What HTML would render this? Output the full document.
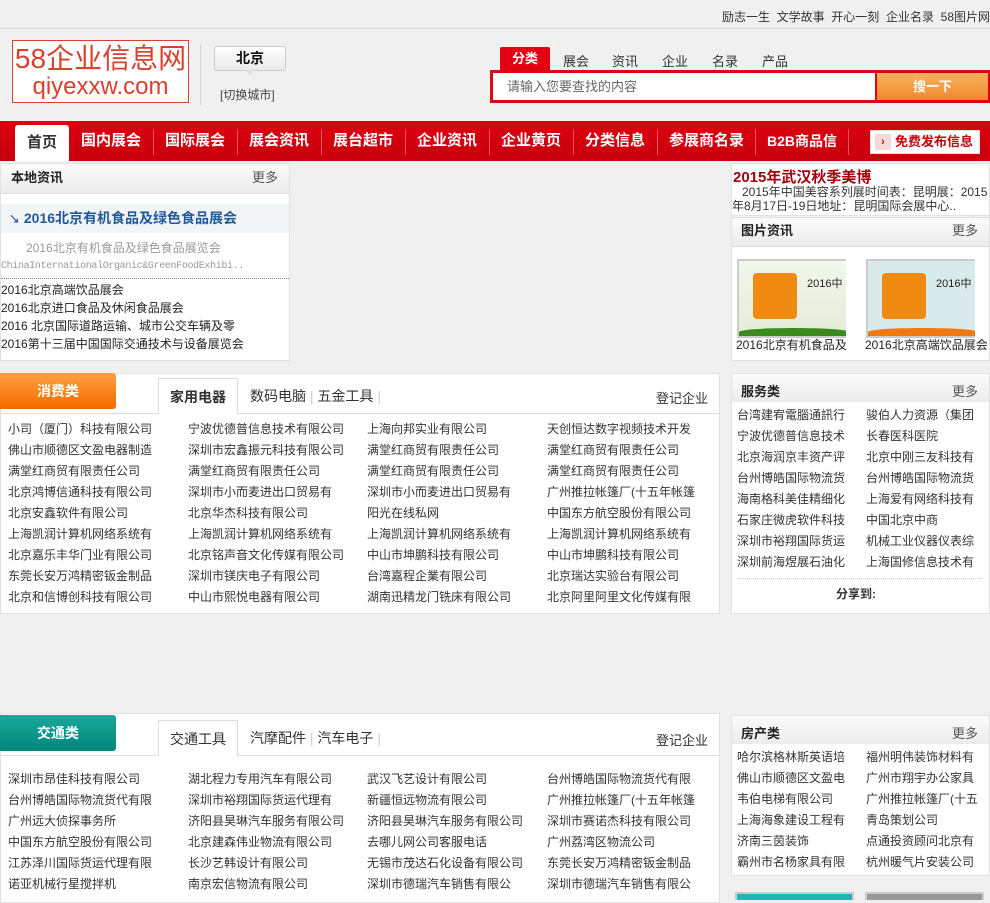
<!DOCTYPE html>
<html><head><meta charset="utf-8">
<style>
*{margin:0;padding:0;box-sizing:border-box}
body{width:990px;height:900px;overflow:hidden;background:#f0f0f0;font-family:"Liberation Sans","WenQuanYi Zen Hei","Noto Sans CJK SC",sans-serif;font-size:12px;color:#333;position:relative}
.a{position:absolute;white-space:nowrap}
.col div{height:21px;line-height:21px;white-space:nowrap;overflow:hidden}
.w{background:#fff;border:1px solid #e2e2e2}
.hd{background:linear-gradient(#fbfbfb,#ececec);border-bottom:1px solid #ddd}
.nav span{position:absolute;top:0;line-height:40px;color:#fff;font-weight:bold;font-size:15px}
.sep{position:absolute;top:8px;width:1px;height:26px;background:#e8505a}
</style></head><body>
<div class="a" style="left:0;top:0;width:990px;height:29px;border-bottom:1px solid #d8d8d8"></div>
<div class="a" style="right:0;top:8px;font-size:12px;color:#333">励志一生&nbsp; 文学故事&nbsp; 开心一刻&nbsp; 企业名录&nbsp; 58图片网</div>
<div class="a" style="left:12px;top:40px;width:177px;height:63px;background:#fff;border:1px solid #d9402e;text-align:center;color:#d9402e">
<div style="font-size:28px;line-height:32px;margin-top:2px">58企业信息网</div>
<div style="font-size:24px;line-height:24px">qiyexxw.com</div></div>
<div class="a" style="left:200px;top:45px;width:1px;height:60px;background:#d5d5d5"></div>
<div class="a" style="left:214px;top:46px;width:72px;height:25px;background:linear-gradient(#fff,#eaeaea);border:1px solid #ccc;border-radius:3px;text-align:center;line-height:23px;font-weight:bold;font-size:14px;color:#111">北京</div>
<div class="a" style="left:245px;top:70px;width:0;height:0;border-left:5px solid transparent;border-right:5px solid transparent;border-top:5px solid #ddd"></div>
<div class="a" style="left:220px;top:86px;color:#444">[切换城市]</div>
<div class="a" style="left:500px;top:47px;width:50px;height:24px;background:#e30013;color:#fff;font-weight:bold;font-size:13px;text-align:center;line-height:24px;border-radius:2px 2px 0 0">分类</div>
<div class="a" style="left:563px;top:51px;font-size:13px">展会</div>
<div class="a" style="left:612px;top:51px;font-size:13px">资讯</div>
<div class="a" style="left:662px;top:51px;font-size:13px">企业</div>
<div class="a" style="left:712px;top:51px;font-size:13px">名录</div>
<div class="a" style="left:762px;top:51px;font-size:13px">产品</div>
<div class="a" style="left:490px;top:70px;width:500px;height:33px;background:#e30013;padding:2px">
<div style="position:absolute;left:3px;top:3px;width:382px;height:27px;background:#fff;color:#666;font-size:13px;line-height:27px;padding-left:14px">请输入您要查找的内容</div>
<div style="position:absolute;left:387px;top:3px;width:111px;height:27px;background:linear-gradient(#f8b060,#ee8a2c);color:#fff;font-weight:bold;font-size:13px;line-height:27px;text-align:center">搜一下</div></div>
<div class="a nav" style="left:0;top:121px;width:990px;height:40px;background:linear-gradient(#dd0010,#c8000c)">
<div style="position:absolute;left:15px;top:4px;width:54px;height:36px;background:#fff;border-radius:3px 3px 0 0"></div>
<span style="left:27px;color:#333;top:2px">首页</span>
<span style="left:81px">国内展会</span><div class="sep" style="left:153px"></div>
<span style="left:165px">国际展会</span><div class="sep" style="left:237px"></div>
<span style="left:249px">展会资讯</span><div class="sep" style="left:321px"></div>
<span style="left:333px">展台超市</span><div class="sep" style="left:405px"></div>
<span style="left:417px">企业资讯</span><div class="sep" style="left:489px"></div>
<span style="left:501px">企业黄页</span><div class="sep" style="left:573px"></div>
<span style="left:585px">分类信息</span><div class="sep" style="left:657px"></div>
<span style="left:669px">参展商名录</span><div class="sep" style="left:755px"></div>
<span style="left:767px;font-size:14px">B2B商品信</span><div class="sep" style="left:848px"></div>
<div style="position:absolute;left:870px;top:9px;width:110px;height:24px;background:#fff;border:1px solid #ddd"><div style="position:absolute;left:4px;top:3px;width:16px;height:16px;background:#f4dada;color:#c00;font-size:11px;text-align:center;line-height:16px;font-weight:bold">›</div><div style="position:absolute;left:24px;top:0;line-height:22px;color:#c8000c;font-weight:bold;font-size:13px">免费发布信息</div></div>
</div>
<div class="a w" style="left:0;top:163px;width:290px;height:198px">
<div class="hd" style="height:30px;line-height:28px;padding-left:10px;font-weight:bold;font-size:13px;color:#222">本地资讯<span style="position:absolute;right:11px;font-weight:normal;color:#555">更多</span></div>
<div style="position:absolute;left:0;top:40px;width:288px;height:29px;background:#f3f4f5;line-height:29px;padding-left:8px;color:#1f5a9a;font-weight:bold;font-size:14px"><span style="font-size:11px">↘</span> 2016北京有机食品及绿色食品展会</div>
<div style="position:absolute;left:25px;top:75px;color:#999">2016北京有机食品及绿色食品展览会</div>
<div style="position:absolute;left:0;top:97px;color:#999;font-family:'Liberation Mono',monospace;font-size:10px;letter-spacing:-0.35px">ChinaInternationalOrganic&amp;GreenFoodExhibi..</div>
<div style="position:absolute;left:0;top:114px;width:288px;border-top:1px dotted #888"></div>
<div class="col" style="position:absolute;left:0;top:117px;color:#222"><div style="height:18px;line-height:18px">2016北京高端饮品展会</div><div style="height:18px;line-height:18px">2016北京进口食品及休闲食品展会</div><div style="height:18px;line-height:18px">2016 北京国际道路运输、城市公交车辆及零</div><div style="height:18px;line-height:18px">2016第十三届中国国际交通技术与设备展览会</div></div>
</div>
<div class="a w" style="left:731px;top:163px;width:259px;height:53px">
<div style="position:absolute;left:1px;top:2px;color:#a0000a;font-weight:bold;font-size:15px">2015年武汉秋季美博</div>
<div style="position:absolute;left:0;top:21px;width:258px;line-height:14px;white-space:normal;color:#333">&nbsp;&nbsp;&nbsp;2015年中国美容系列展时间表：昆明展：2015年8月17日-19日地址：昆明国际会展中心..</div></div>
<div class="a w" style="left:731px;top:217px;width:259px;height:144px">
<div class="hd" style="height:29px;line-height:26px;padding-left:9px;font-weight:bold;font-size:13px;color:#222">图片资讯<span style="position:absolute;right:11px;font-weight:normal;color:#555">更多</span></div>
<div style="position:absolute;left:5px;top:41px;width:109px;height:79px;border:2px solid #ccc;border-right:none;background:linear-gradient(#f2f6ec,#e4ecd8);overflow:hidden"><div style="position:absolute;left:14px;top:12px;width:44px;height:46px;background:#f08a10;border-radius:4px"></div><div style="position:absolute;left:68px;top:14px;font-size:11px;color:#222">2016中</div><div style="position:absolute;left:0;bottom:0;width:110px;height:8px;background:#3c8a1c;border-radius:50% 50% 0 0"></div></div>
<div style="position:absolute;left:134px;top:41px;width:109px;height:79px;border:2px solid #ccc;border-right:none;background:#d9eaea;overflow:hidden"><div style="position:absolute;left:14px;top:12px;width:44px;height:46px;background:#f08a10;border-radius:4px"></div><div style="position:absolute;left:68px;top:14px;font-size:11px;color:#222">2016中</div><div style="position:absolute;left:0;bottom:0;width:110px;height:8px;background:#f07810;border-radius:50% 50% 0 0"></div></div>
<div style="position:absolute;left:4px;top:118px;color:#222">2016北京有机食品及</div>
<div style="position:absolute;left:133px;top:118px;color:#222">2016北京高端饮品展会</div></div>
<div class="a w" style="left:0;top:373px;width:720px;height:241px">
<div style="position:absolute;left:0;top:39px;width:718px;border-top:1px solid #ddd"></div>
<div style="position:absolute;left:-1px;top:-1px;width:116px;height:36px;background:linear-gradient(#ffa040,#f36b00);border-radius:0 3px 3px 0;color:#fff;font-weight:bold;font-size:14px;text-align:center;line-height:36px">消费类</div>
<div style="position:absolute;left:157px;top:4px;width:80px;height:36px;background:#fff;border:1px solid #ddd;border-bottom:none;text-align:center;line-height:36px;font-size:14px;font-weight:bold;color:#333">家用电器</div>
<div style="position:absolute;left:249px;top:12px;font-size:14px;color:#333">数码电脑 <span style="color:#ccc">|</span> 五金工具 <span style="color:#ccc">|</span></div>
<div style="position:absolute;left:655px;top:14px;font-size:13px;color:#333">登记企业</div>
<div class="col" style="position:absolute;left:7px;top:45px;width:170px"><div>小司（厦门）科技有限公司</div><div>佛山市顺德区文盈电器制造</div><div>满堂红商贸有限责任公司</div><div>北京鸿博信通科技有限公司</div><div>北京安鑫软件有限公司</div><div>上海凯润计算机网络系统有</div><div>北京嘉乐丰华门业有限公司</div><div>东莞长安万鸿精密钣金制品</div><div>北京和信博创科技有限公司</div></div>
<div class="col" style="position:absolute;left:187px;top:45px;width:170px"><div>宁波优德普信息技术有限公司</div><div>深圳市宏鑫振元科技有限公司</div><div>满堂红商贸有限责任公司</div><div>深圳市小而麦进出口贸易有</div><div>北京华杰科技有限公司</div><div>上海凯润计算机网络系统有</div><div>北京铭声音文化传媒有限公司</div><div>深圳市镁庆电子有限公司</div><div>中山市熙悦电器有限公司</div></div>
<div class="col" style="position:absolute;left:366px;top:45px;width:170px"><div>上海向邦实业有限公司</div><div>满堂红商贸有限责任公司</div><div>满堂红商贸有限责任公司</div><div>深圳市小而麦进出口贸易有</div><div>阳光在线私网</div><div>上海凯润计算机网络系统有</div><div>中山市坤鹏科技有限公司</div><div>台湾嘉程企業有限公司</div><div>湖南迅精龙门铣床有限公司</div></div>
<div class="col" style="position:absolute;left:546px;top:45px;width:170px"><div>天创恒达数字视频技术开发</div><div>满堂红商贸有限责任公司</div><div>满堂红商贸有限责任公司</div><div>广州推拉帐篷厂(十五年帐篷</div><div>中国东方航空股份有限公司</div><div>上海凯润计算机网络系统有</div><div>中山市坤鹏科技有限公司</div><div>北京瑞达实验台有限公司</div><div>北京阿里阿里文化传媒有限</div></div>
</div>
<div class="a w" style="left:731px;top:373px;width:259px;height:241px">
<div class="hd" style="height:28px;line-height:36px;padding-left:9px;font-weight:bold;font-size:13px;color:#222;border-bottom:none">服务类<span style="position:absolute;right:11px;font-weight:normal;color:#555">更多</span></div>
<div class="col" style="position:absolute;left:5px;top:31px;width:120px"><div>台湾建宥電腦通訊行</div><div>宁波优德普信息技术</div><div>北京海润京丰资产评</div><div>台州博皓国际物流货</div><div>海南格科美佳精细化</div><div>石家庄微虎软件科技</div><div>深圳市裕翔国际货运</div><div>深圳前海煜展石油化</div></div>
<div class="col" style="position:absolute;left:134px;top:31px;width:124px"><div>骏伯人力资源（集团</div><div>长春医科医院</div><div>北京中刚三友科技有</div><div>台州博皓国际物流货</div><div>上海爱有网络科技有</div><div>中国北京中商</div><div>机械工业仪器仪表综</div><div>上海国修信息技术有</div></div>
<div style="position:absolute;left:6px;top:204px;width:244px;border-top:1px dotted #ccc"></div>
<div style="position:absolute;left:104px;top:211px;font-weight:bold;color:#333">分享到:</div></div>
<div class="a w" style="left:0;top:713px;width:720px;height:190px">
<div style="position:absolute;left:0;top:41px;width:718px;border-top:1px solid #ddd"></div>
<div style="position:absolute;left:-1px;top:1px;width:116px;height:36px;background:linear-gradient(#1aa89a,#00877a);border-radius:0 3px 3px 0;color:#fff;font-weight:bold;font-size:14px;text-align:center;line-height:36px">交通类</div>
<div style="position:absolute;left:157px;top:6px;width:80px;height:36px;background:#fff;border:1px solid #ddd;border-bottom:none;text-align:center;line-height:36px;font-size:14px;color:#333">交通工具</div>
<div style="position:absolute;left:249px;top:14px;font-size:14px;color:#333">汽摩配件 <span style="color:#ccc">|</span> 汽车电子 <span style="color:#ccc">|</span></div>
<div style="position:absolute;left:655px;top:16px;font-size:13px;color:#333">登记企业</div>
<div class="col" style="position:absolute;left:7px;top:55px;width:170px"><div>深圳市昂佳科技有限公司</div><div>台州博皓国际物流货代有限</div><div>广州远大侦探事务所</div><div>中国东方航空股份有限公司</div><div>江苏泽川国际货运代理有限</div><div>诺亚机械行星搅拌机</div></div>
<div class="col" style="position:absolute;left:187px;top:55px;width:170px"><div>湖北程力专用汽车有限公司</div><div>深圳市裕翔国际货运代理有</div><div>济阳县昊琳汽车服务有限公司</div><div>北京建森伟业物流有限公司</div><div>长沙艺韩设计有限公司</div><div>南京宏信物流有限公司</div></div>
<div class="col" style="position:absolute;left:366px;top:55px;width:170px"><div>武汉飞艺设计有限公司</div><div>新疆恒远物流有限公司</div><div>济阳县昊琳汽车服务有限公司</div><div>去哪儿网公司客服电话</div><div>无锡市茂达石化设备有限公司</div><div>深圳市德瑞汽车销售有限公</div></div>
<div class="col" style="position:absolute;left:546px;top:55px;width:170px"><div>台州博皓国际物流货代有限</div><div>广州推拉帐篷厂(十五年帐篷</div><div>深圳市赛诺杰科技有限公司</div><div>广州荔湾区物流公司</div><div>东莞长安万鸿精密钣金制品</div><div>深圳市德瑞汽车销售有限公</div></div>
</div>
<div class="a w" style="left:731px;top:715px;width:259px;height:161px">
<div class="hd" style="height:28px;line-height:36px;padding-left:9px;font-weight:bold;font-size:13px;color:#222;border-bottom:none">房产类<span style="position:absolute;right:11px;font-weight:normal;color:#555">更多</span></div>
<div class="col" style="position:absolute;left:5px;top:31px;width:120px"><div>哈尔滨格林斯英语培</div><div>佛山市顺德区文盈电</div><div>韦伯电梯有限公司</div><div>上海海象建设工程有</div><div>济南三茵装饰</div><div>霸州市名杨家具有限</div></div>
<div class="col" style="position:absolute;left:134px;top:31px;width:124px"><div>福州明伟装饰材料有</div><div>广州市翔宇办公家具</div><div>广州推拉帐篷厂(十五</div><div>青岛策划公司</div><div>点通投资顾问北京有</div><div>杭州暖气片安装公司</div></div></div>
<div class="a" style="left:735px;top:892px;width:119px;height:8px;background:#2bb0b8;border:2px solid #ccc;border-bottom:none"></div>
<div class="a" style="left:865px;top:892px;width:119px;height:8px;background:#999;border:2px solid #ccc;border-bottom:none"></div>
</body></html>
